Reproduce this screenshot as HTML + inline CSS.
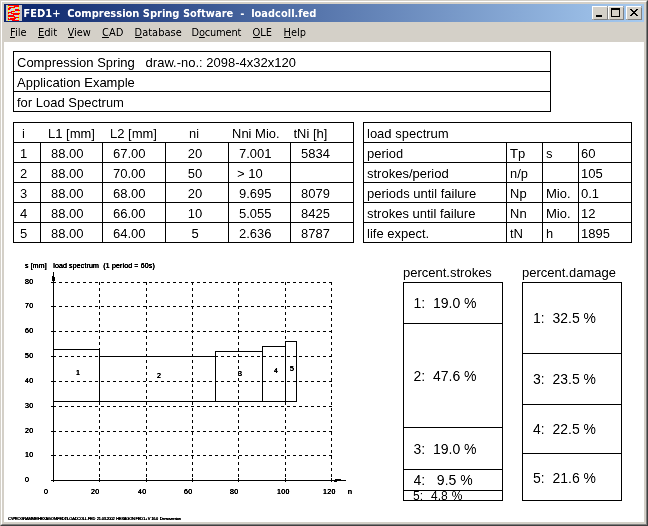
<!DOCTYPE html>
<html><head><meta charset="utf-8"><title>FED1+ Compression Spring Software - loadcoll.fed</title>
<style>
html,body{margin:0;padding:0;}
body{width:648px;height:526px;overflow:hidden;background:#d4d0c8;position:relative;font-family:"Liberation Sans",sans-serif;font-size:13px;color:#000;}
.abs{position:absolute;}
#frame{left:0;top:0;width:648px;height:526px;box-sizing:border-box;border:1px solid;border-color:#d4d0c8 #404040 #404040 #d4d0c8;}
#frame2{left:1px;top:1px;width:646px;height:524px;box-sizing:border-box;border:1px solid;border-color:#fff #808080 #808080 #fff;}
#title{left:4px;top:4px;width:640px;height:18px;background:linear-gradient(to right,#0a246a,#a6caf0);}
#title span{position:absolute;left:19.5px;top:3px;font-family:"DejaVu Sans Condensed","Liberation Sans",sans-serif;font-weight:bold;font-size:11px;line-height:14px;color:#fff;white-space:pre;filter:url(#th);}
.btn{position:absolute;top:2px;width:16px;height:14px;box-sizing:border-box;background:#d4d0c8;border:1px solid;border-color:#fff #404040 #404040 #fff;}
.btn i{position:absolute;left:0;top:0;width:13px;height:11px;border:1px solid;border-color:#d4d0c8 #808080 #808080 #d4d0c8;box-sizing:content-box;}
#menu{left:4px;top:23px;width:640px;height:19px;font-family:"DejaVu Sans Condensed","Liberation Sans",sans-serif;font-size:11px;line-height:19px;}
#menu span{position:absolute;top:0;white-space:pre;filter:url(#th);}
#menu u{text-decoration:underline;text-underline-offset:1px;}
#client{left:4px;top:42px;width:640px;height:480px;background:#fff;}
.t{position:absolute;white-space:pre;line-height:16px;height:16px;filter:url(#th);}
.c{text-align:center;}
.s{position:absolute;white-space:pre;font-size:7px;line-height:8px;filter:url(#th2);}
</style></head><body>
<svg width="0" height="0" style="position:absolute"><defs><filter id="th" x="0" y="0" width="100%" height="100%" color-interpolation-filters="sRGB"><feComponentTransfer><feFuncA type="table" tableValues="0 0.2 0.8 1"/></feComponentTransfer></filter><filter id="th2" x="0" y="0" width="100%" height="100%" color-interpolation-filters="sRGB"><feComponentTransfer><feFuncA type="table" tableValues="0 0.6 1 1 1"/></feComponentTransfer></filter></defs></svg>
<div id="frame" class="abs"></div><div id="frame2" class="abs"></div>
<div id="title" class="abs">
<svg class="abs" style="left:2px;top:1px" width="16" height="16" viewBox="0 0 16 16" shape-rendering="crispEdges"><rect width="16" height="16" fill="#ff0000"/><rect x="0" y="0" width="2" height="1" fill="#c6c3c6"/><rect x="13" y="0" width="3" height="1" fill="#c6c3c6"/><rect x="0" y="1" width="2" height="1" fill="#c6c3c6"/><rect x="2" y="1" width="1" height="1" fill="#ffff00"/><rect x="3" y="1" width="4" height="1" fill="#c4d4dc"/><rect x="7" y="1" width="1" height="1" fill="#ffff00"/><rect x="13" y="1" width="3" height="1" fill="#c6c3c6"/><rect x="0" y="2" width="2" height="1" fill="#c6c3c6"/><rect x="2" y="2" width="1" height="1" fill="#ffff00"/><rect x="9" y="2" width="3" height="1" fill="#c4d4dc"/><rect x="12" y="2" width="1" height="1" fill="#ffff00"/><rect x="13" y="2" width="3" height="1" fill="#c6c3c6"/><rect x="0" y="3" width="2" height="1" fill="#c6c3c6"/><rect x="5" y="3" width="2" height="1" fill="#c4d4dc"/><rect x="7" y="3" width="1" height="1" fill="#ffff00"/><rect x="8" y="3" width="4" height="1" fill="#c4d4dc"/><rect x="12" y="3" width="1" height="1" fill="#ffff00"/><rect x="13" y="3" width="3" height="1" fill="#c6c3c6"/><rect x="0" y="4" width="2" height="1" fill="#c6c3c6"/><rect x="4" y="4" width="5" height="1" fill="#c4d4dc"/><rect x="13" y="4" width="3" height="1" fill="#c6c3c6"/><rect x="0" y="5" width="2" height="1" fill="#c6c3c6"/><rect x="2" y="5" width="1" height="1" fill="#ffff00"/><rect x="3" y="5" width="4" height="1" fill="#c4d4dc"/><rect x="7" y="5" width="1" height="1" fill="#ffff00"/><rect x="8" y="5" width="1" height="1" fill="#c4d4dc"/><rect x="14" y="5" width="2" height="1" fill="#c6c3c6"/><rect x="0" y="6" width="2" height="1" fill="#c6c3c6"/><rect x="2" y="6" width="1" height="1" fill="#ffff00"/><rect x="3" y="6" width="2" height="1" fill="#c4d4dc"/><rect x="9" y="6" width="3" height="1" fill="#c4d4dc"/><rect x="12" y="6" width="1" height="1" fill="#ffff00"/><rect x="13" y="6" width="3" height="1" fill="#c6c3c6"/><rect x="0" y="7" width="2" height="1" fill="#c6c3c6"/><rect x="6" y="7" width="1" height="1" fill="#c4d4dc"/><rect x="7" y="7" width="1" height="1" fill="#ffff00"/><rect x="8" y="7" width="4" height="1" fill="#c4d4dc"/><rect x="12" y="7" width="1" height="1" fill="#ffff00"/><rect x="13" y="7" width="3" height="1" fill="#c6c3c6"/><rect x="0" y="8" width="2" height="1" fill="#c6c3c6"/><rect x="3" y="8" width="2" height="1" fill="#c4d4dc"/><rect x="14" y="8" width="2" height="1" fill="#c6c3c6"/><rect x="0" y="9" width="2" height="1" fill="#c6c3c6"/><rect x="2" y="9" width="1" height="1" fill="#ffff00"/><rect x="3" y="9" width="4" height="1" fill="#c4d4dc"/><rect x="13" y="9" width="3" height="1" fill="#c6c3c6"/><rect x="0" y="10" width="2" height="1" fill="#c6c3c6"/><rect x="8" y="10" width="4" height="1" fill="#c4d4dc"/><rect x="12" y="10" width="1" height="1" fill="#ffff00"/><rect x="13" y="10" width="3" height="1" fill="#c6c3c6"/><rect x="0" y="11" width="2" height="1" fill="#c6c3c6"/><rect x="9" y="11" width="3" height="1" fill="#c4d4dc"/><rect x="12" y="11" width="1" height="1" fill="#ffff00"/><rect x="13" y="11" width="3" height="1" fill="#c6c3c6"/><rect x="0" y="12" width="2" height="1" fill="#c6c3c6"/><rect x="2" y="12" width="1" height="1" fill="#ffff00"/><rect x="3" y="12" width="4" height="1" fill="#c4d4dc"/><rect x="7" y="12" width="1" height="1" fill="#ffff00"/><rect x="13" y="12" width="3" height="1" fill="#c6c3c6"/><rect x="0" y="13" width="2" height="1" fill="#c6c3c6"/><rect x="3" y="13" width="1" height="1" fill="#c4d4dc"/><rect x="10" y="13" width="2" height="1" fill="#c4d4dc"/><rect x="12" y="13" width="1" height="1" fill="#ffff00"/><rect x="13" y="13" width="3" height="1" fill="#c6c3c6"/><rect x="0" y="14" width="2" height="1" fill="#c6c3c6"/><rect x="9" y="14" width="3" height="1" fill="#c4d4dc"/><rect x="12" y="14" width="1" height="1" fill="#ffff00"/><rect x="13" y="14" width="3" height="1" fill="#c6c3c6"/><rect x="0" y="15" width="2" height="1" fill="#c6c3c6"/><rect x="2" y="15" width="1" height="1" fill="#ffff00"/><rect x="3" y="15" width="3" height="1" fill="#c4d4dc"/><rect x="13" y="15" width="3" height="1" fill="#c6c3c6"/></svg>
<span>FED1+  Compression Spring Software  -  loadcoll.fed</span>
<div class="btn" style="left:588px"><i></i><svg class="abs" style="left:0;top:0" width="14" height="12"><rect x="3" y="8" width="6" height="2" fill="#000"/></svg></div>
<div class="btn" style="left:604px"><i></i><svg class="abs" style="left:0;top:0" width="14" height="12"><rect x="2.5" y="1.5" width="8" height="8" fill="none" stroke="#000"/><rect x="2" y="1" width="9" height="2" fill="#000"/></svg></div>
<div class="btn" style="left:622px"><i></i><svg class="abs" style="left:0;top:0" width="14" height="12" shape-rendering="crispEdges"><g fill="#000"><rect x="3" y="2" width="2" height="1"/><rect x="9" y="2" width="2" height="1"/><rect x="4" y="3" width="2" height="1"/><rect x="8" y="3" width="2" height="1"/><rect x="5" y="4" width="4" height="1"/><rect x="6" y="5" width="2" height="1"/><rect x="5" y="6" width="4" height="1"/><rect x="4" y="7" width="2" height="1"/><rect x="8" y="7" width="2" height="1"/><rect x="3" y="8" width="2" height="1"/><rect x="9" y="8" width="2" height="1"/></g></svg></div>
</div>
<div id="menu" class="abs">
<span style="left:6px"><u>F</u>ile</span>
<span style="left:34px"><u>E</u>dit</span>
<span style="left:63.5px"><u>V</u>iew</span>
<span style="left:98px"><u>C</u>AD</span>
<span style="left:130.5px"><u>D</u>atabase</span>
<span style="left:187.5px;letter-spacing:-0.2px">D<u>o</u>cument</span>
<span style="left:248.5px"><u>O</u>LE</span>
<span style="left:279.5px"><u>H</u>elp</span>
</div>
<div id="client" class="abs"></div>

<svg class="abs" style="left:0;top:0" width="648" height="526" viewBox="0 0 648 526" shape-rendering="crispEdges" fill="none" stroke="#000" stroke-width="1">
<path d="M13 51.5H551"/>
<path d="M13 71.5H551"/>
<path d="M13 91.5H551"/>
<path d="M13 111.5H551"/>
<path d="M13.5 51V112"/>
<path d="M550.5 51V112"/>
<path d="M13 122.5H354"/>
<path d="M13 142.5H354"/>
<path d="M13 162.5H354"/>
<path d="M13 182.5H354"/>
<path d="M13 202.5H354"/>
<path d="M13 222.5H354"/>
<path d="M13 242.5H354"/>
<path d="M13.5 122V243"/>
<path d="M353.5 122V243"/>
<path d="M40.5 142V243"/>
<path d="M102.5 142V243"/>
<path d="M165.5 142V243"/>
<path d="M228.5 142V243"/>
<path d="M290.5 142V243"/>
<path d="M363 122.5H632"/>
<path d="M363 142.5H632"/>
<path d="M363 162.5H632"/>
<path d="M363 182.5H632"/>
<path d="M363 202.5H632"/>
<path d="M363 222.5H632"/>
<path d="M363 242.5H632"/>
<path d="M363.5 122V243"/>
<path d="M631.5 122V243"/>
<path d="M506.5 142V243"/>
<path d="M542.5 142V243"/>
<path d="M578.5 142V243"/>
<rect x="403.5" y="282.5" width="99" height="218"/>
<rect x="522.5" y="282.5" width="99" height="218"/>
<path d="M403 323.5H503"/>
<path d="M403 427.5H503"/>
<path d="M403 469.5H503"/>
<path d="M403 490.5H503"/>
<path d="M522 353.5H622"/>
<path d="M522 404.5H622"/>
<path d="M522 453.5H622"/>
<path d="M53 455.5H332" stroke-dasharray="3 3"/>
<path d="M51 455.5H56"/>
<path d="M53 431.5H332" stroke-dasharray="3 3"/>
<path d="M51 431.5H56"/>
<path d="M53 406.5H332" stroke-dasharray="3 3"/>
<path d="M51 406.5H56"/>
<path d="M53 381.5H332" stroke-dasharray="3 3"/>
<path d="M51 381.5H56"/>
<path d="M53 356.5H332" stroke-dasharray="3 3"/>
<path d="M51 356.5H56"/>
<path d="M53 331.5H332" stroke-dasharray="3 3"/>
<path d="M51 331.5H56"/>
<path d="M53 306.5H332" stroke-dasharray="3 3"/>
<path d="M51 306.5H56"/>
<path d="M53 282.5H332" stroke-dasharray="3 3"/>
<path d="M51 282.5H56"/>
<path d="M99.5 282V478" stroke-dasharray="3 3"/>
<path d="M99.5 478V482"/>
<path d="M146.5 282V478" stroke-dasharray="3 3"/>
<path d="M146.5 478V482"/>
<path d="M192.5 282V478" stroke-dasharray="3 3"/>
<path d="M192.5 478V482"/>
<path d="M238.5 282V478" stroke-dasharray="3 3"/>
<path d="M238.5 478V482"/>
<path d="M285.5 282V478" stroke-dasharray="3 3"/>
<path d="M285.5 478V482"/>
<path d="M331.5 282V478" stroke-dasharray="3 3"/>
<path d="M331.5 478V482"/>
<path d="M53.5 272V482"/>
<path d="M51 480.5H346"/>
<path d="M335 479.5H341M334 481.5H337" />
<path d="M52 276.5H54M52 277.5H55M52 278.5H55M52 279.5H55M52 280.5H55"/>
<path d="M53 401.5H297"/>
<path d="M53 349.5H100"/>
<path d="M99 356.5H216"/>
<path d="M215 351.5H263"/>
<path d="M262 346.5H286"/>
<path d="M285 341.5H297"/>
<path d="M99.5 349V402"/>
<path d="M215.5 351V402"/>
<path d="M262.5 346V402"/>
<path d="M285.5 341V402"/>
<path d="M296.5 341V402"/>
</svg>
<div class="t" style="left:17px;top:55px;">Compression Spring   draw.-no.: 2098-4x32x120</div>
<div class="t" style="left:17px;top:75px;">Application Example</div>
<div class="t" style="left:17px;top:95px;">for Load Spectrum</div>
<div class="t" style="left:22px;top:126px;">i</div>
<div class="t" style="left:48px;top:126px;">L1 [mm]</div>
<div class="t" style="left:110px;top:126px;">L2 [mm]</div>
<div class="t" style="left:189px;top:126px;">ni</div>
<div class="t" style="left:232px;top:126px;">Nni Mio.</div>
<div class="t" style="left:293.5px;top:126px;">tNi [h]</div>
<div class="t" style="left:20px;top:146px;">1</div>
<div class="t" style="left:51px;top:146px;">88.00</div>
<div class="t" style="left:113px;top:146px;">67.00</div>
<div class="t c" style="left:164px;top:146px;width:62px;">20</div>
<div class="t" style="left:239px;top:146px;">7.001</div>
<div class="t" style="left:301px;top:146px;">5834</div>
<div class="t" style="left:20px;top:166px;">2</div>
<div class="t" style="left:51px;top:166px;">88.00</div>
<div class="t" style="left:113px;top:166px;">70.00</div>
<div class="t c" style="left:164px;top:166px;width:62px;">50</div>
<div class="t" style="left:237px;top:166px;">&gt; 10</div>
<div class="t" style="left:301px;top:166px;"></div>
<div class="t" style="left:20px;top:186px;">3</div>
<div class="t" style="left:51px;top:186px;">88.00</div>
<div class="t" style="left:113px;top:186px;">68.00</div>
<div class="t c" style="left:164px;top:186px;width:62px;">20</div>
<div class="t" style="left:239px;top:186px;">9.695</div>
<div class="t" style="left:301px;top:186px;">8079</div>
<div class="t" style="left:20px;top:206px;">4</div>
<div class="t" style="left:51px;top:206px;">88.00</div>
<div class="t" style="left:113px;top:206px;">66.00</div>
<div class="t c" style="left:164px;top:206px;width:62px;">10</div>
<div class="t" style="left:239px;top:206px;">5.055</div>
<div class="t" style="left:301px;top:206px;">8425</div>
<div class="t" style="left:20px;top:226px;">5</div>
<div class="t" style="left:51px;top:226px;">88.00</div>
<div class="t" style="left:113px;top:226px;">64.00</div>
<div class="t c" style="left:164px;top:226px;width:62px;">5</div>
<div class="t" style="left:239px;top:226px;">2.636</div>
<div class="t" style="left:301px;top:226px;">8787</div>
<div class="t" style="left:367px;top:126px;">load spectrum</div>
<div class="t" style="left:367px;top:146px;">period</div>
<div class="t" style="left:510px;top:146px;">Tp</div>
<div class="t" style="left:546px;top:146px;">s</div>
<div class="t" style="left:581px;top:146px;">60</div>
<div class="t" style="left:367px;top:166px;">strokes/period</div>
<div class="t" style="left:510px;top:166px;">n/p</div>
<div class="t" style="left:546px;top:166px;"></div>
<div class="t" style="left:581px;top:166px;">105</div>
<div class="t" style="left:367px;top:186px;">periods until failure</div>
<div class="t" style="left:510px;top:186px;">Np</div>
<div class="t" style="left:546px;top:186px;">Mio.</div>
<div class="t" style="left:581px;top:186px;">0.1</div>
<div class="t" style="left:367px;top:206px;">strokes until failure</div>
<div class="t" style="left:510px;top:206px;">Nn</div>
<div class="t" style="left:546px;top:206px;">Mio.</div>
<div class="t" style="left:581px;top:206px;">12</div>
<div class="t" style="left:367px;top:226px;">life expect.</div>
<div class="t" style="left:510px;top:226px;">tN</div>
<div class="t" style="left:546px;top:226px;">h</div>
<div class="t" style="left:581px;top:226px;">1895</div>
<div class="t" style="left:403px;top:265px;">percent.strokes</div>
<div class="t" style="left:522px;top:265px;">percent.damage</div>
<div class="t" style="left:413.5px;top:295px;font-size:14px;">1:  19.0 %</div>
<div class="t" style="left:413.5px;top:367.5px;font-size:14px;">2:  47.6 %</div>
<div class="t" style="left:413.5px;top:441px;font-size:14px;">3:  19.0 %</div>
<div class="t" style="left:413.5px;top:472px;font-size:14px;">4:   9.5 %</div>
<div class="t" style="left:413px;top:488px;font-size:12px;height:12px;overflow:hidden;word-spacing:0.7px;">5:  4.8 %</div>
<div class="t" style="left:533px;top:310px;font-size:14px;">1:  32.5 %</div>
<div class="t" style="left:533px;top:371px;font-size:14px;">3:  23.5 %</div>
<div class="t" style="left:533px;top:421px;font-size:14px;">4:  22.5 %</div>
<div class="t" style="left:533px;top:470px;font-size:14px;">5:  21.6 %</div>
<div class="s" style="left:25px;top:262px;letter-spacing:0.15px;">s [mm]   load spectrum  (1 period = 60s)</div>
<div class="s" style="left:25px;top:451px;letter-spacing:0.4px;">10</div>
<div class="s" style="left:25px;top:427px;letter-spacing:0.4px;">20</div>
<div class="s" style="left:25px;top:402px;letter-spacing:0.4px;">30</div>
<div class="s" style="left:25px;top:377px;letter-spacing:0.4px;">40</div>
<div class="s" style="left:25px;top:352px;letter-spacing:0.4px;">50</div>
<div class="s" style="left:25px;top:327px;letter-spacing:0.4px;">60</div>
<div class="s" style="left:25px;top:302px;letter-spacing:0.4px;">70</div>
<div class="s" style="left:25px;top:278px;letter-spacing:0.4px;">80</div>
<div class="s" style="left:25px;top:476px;letter-spacing:0.4px;">0</div>
<div class="s" style="left:44px;top:488px;letter-spacing:0.4px;">0</div>
<div class="s" style="left:91px;top:488px;letter-spacing:0.4px;">20</div>
<div class="s" style="left:138px;top:488px;letter-spacing:0.4px;">40</div>
<div class="s" style="left:184px;top:488px;letter-spacing:0.4px;">60</div>
<div class="s" style="left:230px;top:488px;letter-spacing:0.4px;">80</div>
<div class="s" style="left:277px;top:488px;letter-spacing:0.4px;">100</div>
<div class="s" style="left:323px;top:488px;letter-spacing:0.4px;">120</div>
<div class="s" style="left:348px;top:488px;">n</div>
<div class="s" style="left:76px;top:369px;">1</div>
<div class="s" style="left:157px;top:372px;">2</div>
<div class="s" style="left:238px;top:370px;">3</div>
<div class="s" style="left:274px;top:367px;">4</div>
<div class="s" style="left:290px;top:365px;">5</div>
<div class="abs" id="tiny" style="left:8px;top:515.500px;font-size:4px;line-height:6px;white-space:pre;letter-spacing:-0.23px;filter:url(#th2)">C:\PROGRAMME\HEXAGON\FED1\LOADCOLL.FED  21.03.2002  HEXAGON FED1+ V 16.0  Demoversion</div>
</body></html>
